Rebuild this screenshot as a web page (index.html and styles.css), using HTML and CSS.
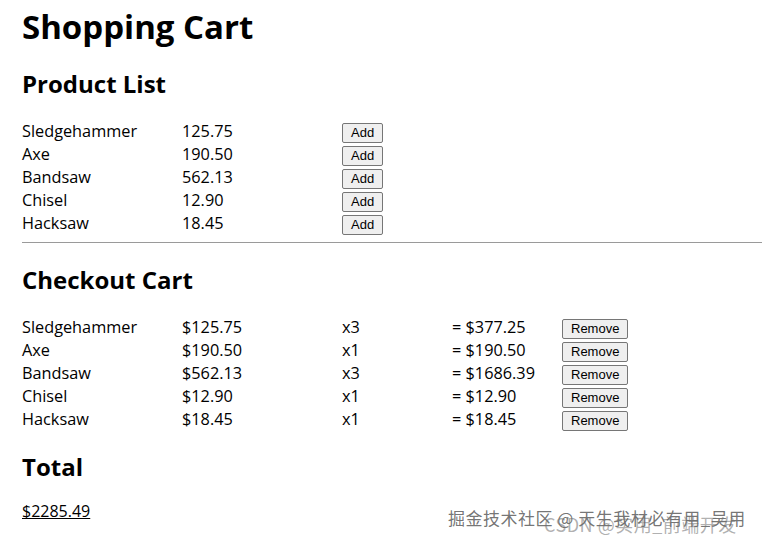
FILE: index.html
```html
<!DOCTYPE html>
<html>
<head>
<meta charset="utf-8">
<link rel="stylesheet" href="styles.css">
</head>
<body>
<div class="page">
  <h1 class="title">Shopping Cart</h1>
  <h2 class="section first">Product List</h2>
  <div class="list products">
    <span>Sledgehammer</span><span>125.75</span><span><button class="btn">Add</button></span>
    <span>Axe</span><span>190.50</span><span><button class="btn">Add</button></span>
    <span>Bandsaw</span><span>562.13</span><span><button class="btn">Add</button></span>
    <span>Chisel</span><span>12.90</span><span><button class="btn">Add</button></span>
    <span>Hacksaw</span><span>18.45</span><span><button class="btn">Add</button></span>
  </div>
  <hr class="rule">
  <h2 class="section">Checkout Cart</h2>
  <div class="list cart">
    <span>Sledgehammer</span><span>$125.75</span><span>x3</span><span>= $377.25</span><span><button class="btn">Remove</button></span>
    <span>Axe</span><span>$190.50</span><span>x1</span><span>= $190.50</span><span><button class="btn">Remove</button></span>
    <span>Bandsaw</span><span>$562.13</span><span>x3</span><span>= $1686.39</span><span><button class="btn">Remove</button></span>
    <span>Chisel</span><span>$12.90</span><span>x1</span><span>= $12.90</span><span><button class="btn">Remove</button></span>
    <span>Hacksaw</span><span>$18.45</span><span>x1</span><span>= $18.45</span><span><button class="btn">Remove</button></span>
  </div>
  <h2 class="section gap-total">Total</h2>
  <p class="total">$2285.49</p>
</div>
<div class="watermark"><span class="wm1">掘金技术社区 @ 天生我材必有用_吴用</span><span class="wm2">CSDN @实用_前端开发</span></div>
</body>
</html>
```
FILE: styles.css
```css
html, body { margin: 0; padding: 0; background: #fff; }
body { font-family: "Open Sans", "Noto Sans", sans-serif; color: #000; }
.page { padding: 5px 0 0 22px; }
.title { font-size: 33px; font-weight: 700; margin: 0; line-height: 44px; }
.section { font-size: 24px; font-weight: 700; margin: 0; line-height: 32px; }
.section.first { margin-top: 19px; }
.list { display: grid; margin-top: 20px; grid-auto-rows: 23px; align-items: center; font-size: 16.3px; line-height: 23px; }
.products { grid-template-columns: 160px 160px auto; }
.cart { grid-template-columns: 160px 160px 110px 110px auto; }
.list > span { display: flex; align-items: center; height: 23px; }
.btn { font-family: "Liberation Sans", Arial, sans-serif; font-size: 13px; padding: 1px 8px; height: 20px; line-height: 16px; border: 1px solid #767676; border-radius: 2px; background: #efefef; color: #000; margin-top: 2px; }
.rule { border: 0; border-top: 1px solid #9a9a9a; margin: 7px 0 21px 0; height: 0; }
.cart { margin-top: 20px; }
.section.gap-total { margin-top: 20px; }
.total { margin: 17px 0 0 0; font-size: 16px; text-decoration: underline; line-height: 23px; }
.watermark { position: absolute; left: 448px; top: 505px; width: 310px; height: 30px; font-family: "Noto Sans CJK SC", sans-serif; font-size: 17px; letter-spacing: 0.5px; color: rgba(80,80,80,0.8); }
.wm1 { position: absolute; left: 0; top: 0; white-space: nowrap; }
.wm2 { position: absolute; left: 96px; top: 6px; white-space: nowrap; font-size: 18px; color: rgba(110,110,110,0.55); }
```
